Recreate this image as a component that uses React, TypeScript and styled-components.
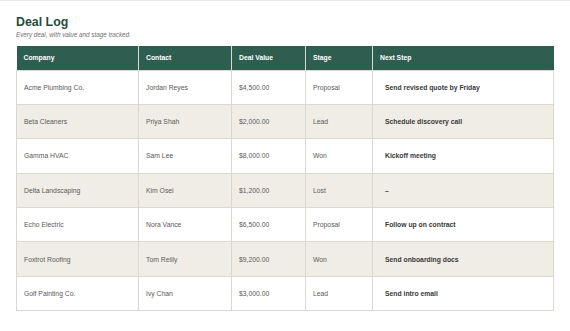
import React from "react";
import styled, { createGlobalStyle } from "styled-components";

const Global = createGlobalStyle`
  html, body { margin: 0; padding: 0; background: #ffffff; }
  body { border-top: 1px solid #e9e9e9; font-family: "Liberation Sans", Arial, sans-serif; }
  *, *::before, *::after { box-sizing: border-box; }
`;

const Page = styled.div`
  padding: 14px 17px 0 16px;
`;

const Title = styled.h1`
  margin: 0;
  font-size: 12.4px;
  line-height: 15px;
  font-weight: 700;
  color: #1f4d3d;
`;

const Subtitle = styled.p`
  margin: 0;
  font-size: 6.3px;
  line-height: 9px;
  font-style: italic;
  color: #707070;
`;

const Table = styled.table`
  margin-top: 7px;
  width: 537px;
  border-collapse: collapse;
  table-layout: fixed;
`;

const Th = styled.th<{ $w: number }>`
  width: ${(p) => p.$w}px;
  height: 24px;
  padding: 0 7px;
  text-align: left;
  background: #2d5e4f;
  color: #ffffff;
  font-size: 6.8px;
  font-weight: 700;
  border-left: 1px solid #d4dcd6;
  &:first-child { border-left: none; }
`;

const Row = styled.tr<{ $alt: boolean }>`
  background: ${(p) => (p.$alt ? "#f0ede6" : "#ffffff")};
`;

const Td = styled.td<{ $bold?: boolean }>`
  height: 34.4px;
  padding: 0 7px 0 ${(p) => (p.$bold ? 12 : 7)}px;
  font-size: 6.8px;
  color: ${(p) => (p.$bold ? "#383838" : "#5a5a5a")};
  font-weight: ${(p) => (p.$bold ? 700 : 400)};
  border: 1px solid #dcd8cd;
  white-space: nowrap;
`;

const cols = [
  { name: "Company", w: 122 },
  { name: "Contact", w: 93 },
  { name: "Deal Value", w: 74 },
  { name: "Stage", w: 67 },
  { name: "Next Step", w: 181 },
];

const deals = [
  ["Acme Plumbing Co.", "Jordan Reyes", "$4,500.00", "Proposal", "Send revised quote by Friday"],
  ["Beta Cleaners", "Priya Shah", "$2,000.00", "Lead", "Schedule discovery call"],
  ["Gamma HVAC", "Sam Lee", "$8,000.00", "Won", "Kickoff meeting"],
  ["Delta Landscaping", "Kim Osei", "$1,200.00", "Lost", "–"],
  ["Echo Electric", "Nora Vance", "$6,500.00", "Proposal", "Follow up on contract"],
  ["Foxtrot Roofing", "Tom Reilly", "$9,200.00", "Won", "Send onboarding docs"],
  ["Golf Painting Co.", "Ivy Chan", "$3,000.00", "Lead", "Send intro email"],
];

export default function App() {
  return (
    <>
      <Global />
      <Page>
        <Title>Deal Log</Title>
        <Subtitle>Every deal, with value and stage tracked.</Subtitle>
        <Table>
          <thead>
            <tr>
              {cols.map((c) => (
                <Th key={c.name} $w={c.w}>{c.name}</Th>
              ))}
            </tr>
          </thead>
          <tbody>
            {deals.map((d, i) => (
              <Row key={d[0]} $alt={i % 2 === 1}>
                {d.map((v, j) => (
                  <Td key={j} $bold={j === 4}>{v}</Td>
                ))}
              </Row>
            ))}
          </tbody>
        </Table>
      </Page>
    </>
  );
}
